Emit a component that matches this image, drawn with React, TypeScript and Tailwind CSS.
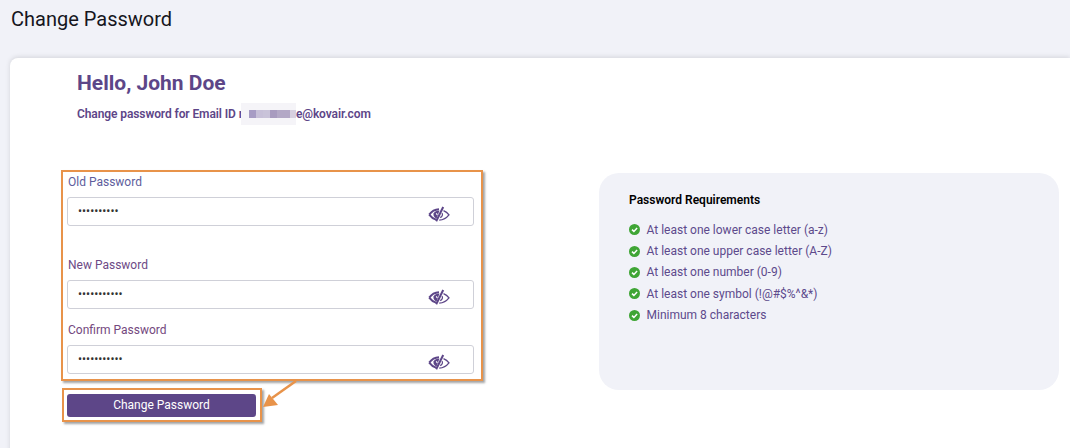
import React from "react";

const font = { fontFamily: "Roboto, sans-serif" };

function EyeOff() {
  return (
    <svg width="22" height="16" viewBox="0 0 22 16" fill="none" className="mt-[4px] block">
      <path d="M1.2 8.6C3.5 5.4 6.5 3.4 11 3.2" stroke="#5d4688" strokeWidth="2" />
      <path d="M1.2 8.6C3 11 5 12.6 8 13.6" stroke="#5d4688" strokeWidth="2" />
      <path d="M5.5 7.5C6.5 5.5 8.5 4.5 11.5 4.5L8.5 12.5C6.5 11.5 5 10 5.5 7.5Z" fill="#5d4688" />
      <path d="M8.2 7.4L9.4 8.8" stroke="#ffffff" strokeWidth="1.2" />
      <path d="M8.2 15.2L15.2 1" stroke="#5d4688" strokeWidth="2" />
      <path d="M15.5 4.6C17.8 5.6 19.6 7 21 8.8C18.6 11.8 15.5 13.8 11.2 14.2" stroke="#5d4688" strokeWidth="1.3" />
      <path d="M14 7C15 8.6 14.4 10.6 12.2 11.6" stroke="#5d4688" strokeWidth="1.2" />
    </svg>
  );
}

function Field({ label, value, labelClass, className }: { label: string; value: string; labelClass: string; className: string }) {
  return (
    <div className={className}>
      <label className={`block pl-[1px] text-[12px] leading-[14px] ${labelClass}`}>{label}</label>
      <div className="mt-[8px] flex h-[29px] items-center justify-between rounded-[3px] border border-[#cfd0d8] bg-white pl-[10px] pr-[23px]">
        <input type="password" readOnly value={value} className="-mt-[1px] w-[200px] bg-transparent text-[12px] text-[#333] outline-none" style={font} />
        <EyeOff />
      </div>
    </div>
  );
}

function Req({ text }: { text: string }) {
  return (
    <li className="flex h-[21.4px] items-center gap-[6.5px] text-[12px] text-[#5d4a8c]">
      <svg width="11" height="11" viewBox="0 0 11 11" className="shrink-0">
        <circle cx="5.5" cy="5.5" r="5.5" fill="#3fa535" />
        <path d="M3 5.6L4.9 7.4L8.1 4" stroke="#fff" strokeWidth="1.5" fill="none" />
      </svg>
      {text}
    </li>
  );
}

export default function App() {
  return (
    <div className="h-[448px] w-[1070px] overflow-hidden bg-[#f1f2f8]" style={font}>
      <h1 className="pl-[11px] pt-[7px] text-[20px] font-normal leading-[24px] text-[#16161d]">Change Password</h1>
      <div className="relative ml-[10px] mt-[27px] h-[400px] rounded-tl-[8px] bg-white shadow-[0_-1px_5px_rgba(0,0,0,0.12)]">
        <div className="pl-[67px] pt-[13px] text-[#5d4688]">
          <h2 className="text-[21px] font-bold leading-[24px]">Hello, John Doe</h2>
          <p className="mt-[11px] flex h-[16px] items-center text-[12px] font-semibold leading-[16px] tracking-[-0.1px]">
            Change password for Email ID r
            <span className="-ml-[2px] flex h-[22px] w-[55px] items-center bg-[#f5f4f8]">
              <span className="w-[8px]" />
              <span className="h-[8px] w-[7px] bg-[#a79cc4]" />
              <span className="h-[8px] w-[7px] bg-[#c7c0d8]" />
              <span className="h-[8px] w-[7px] bg-[#c9c3d9]" />
              <span className="h-[8px] w-[7px] bg-[#a89bbf]" />
              <span className="h-[8px] w-[13px] bg-[#b3a8c6]" />
              <span className="h-[8px] w-[6px] bg-[#d7d0e0]" />
            </span>
            e@kovair.com
          </p>
        </div>

        <div className="mt-[48px] flex items-start">
          <div className="ml-[51px] w-[450px]">
            <div className="h-[211px] w-[422px] border-[2.5px] border-[#e8934a] bg-white pl-[4px] pr-[7.5px] shadow-[2px_2px_2px_rgba(90,90,90,0.55)]">
              <Field label="Old Password" value="••••••••••" labelClass="text-[#5d5d9c]" className="pt-[3px]" />
              <Field label="New Password" value="•••••••••••" labelClass="text-[#6d4a86]" className="mt-[32px]" />
              <Field label="Confirm Password" value="•••••••••••" labelClass="text-[#74487e]" className="mt-[14px]" />
            </div>
            <div className="ml-[1px] mt-[7px] flex h-[34px] w-[200px] items-center border-[2.5px] border-[#e8934a] bg-white px-[3px] shadow-[2px_2px_2px_rgba(90,90,90,0.55)]">
              <button className="h-[23px] w-[189px] rounded-[3px] bg-[#5d4688] text-[12px] leading-[23px] text-white">Change Password</button>
            </div>
          </div>

          <div className="ml-[88px] mt-[3px] h-[217px] w-[460px] rounded-[20px] bg-[#f1f2f8] pl-[30px] pt-[19px]">
            <h3 className="text-[12px] font-semibold leading-[16px] text-black">Password Requirements</h3>
            <ul className="mt-[11px]">
              <Req text="At least one lower case letter (a-z)" />
              <Req text="At least one upper case letter (A-Z)" />
              <Req text="At least one number (0-9)" />
              <Req text="At least one symbol (!@#$%^&*)" />
              <Req text="Minimum 8 characters" />
            </ul>
          </div>
        </div>

        <svg width="50" height="36" viewBox="0 0 50 36" className="absolute left-[245px] top-[322px]">
          <path d="M41 1L17 18" stroke="#e8934a" strokeWidth="2.5" />
          <path d="M8 27L14 14L23 25Z" fill="#e8934a" />
        </svg>
      </div>
    </div>
  );
}
